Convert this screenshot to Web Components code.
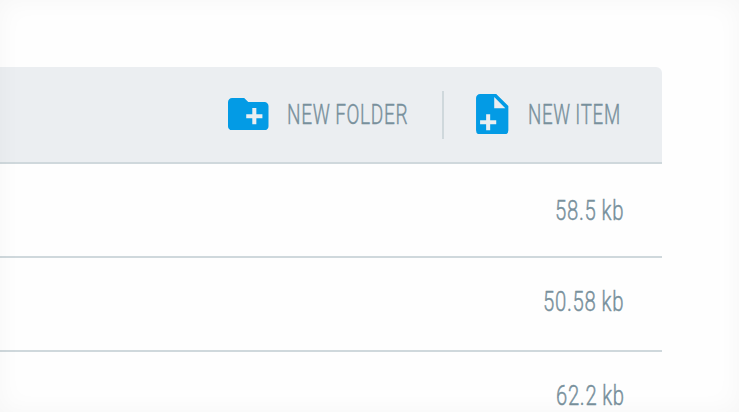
<!DOCTYPE html>
<html lang="en">
<head>
<meta charset="utf-8">
<title>Files</title>
<style>
html,body{margin:0;width:739px;height:412px;overflow:hidden;background:#fefefe}
</style>
</head>
<body>
<file-panel></file-panel>
<script>
// Text condensed to a given ink width; the host box is one cap height tall.
class CondensedText extends HTMLElement {
  connectedCallback() {
    const w = this.getAttribute('width');
    this.attachShadow({ mode: 'open' }).innerHTML = `<style>
      :host{display:block;flex:none;width:${w}px;height:20px}
      svg{display:block;overflow:visible}
      text{font:300 28px/20px Roboto,"Liberation Sans",sans-serif;letter-spacing:1px;word-spacing:-1px;fill:#78909c;stroke:#78909c;stroke-width:.45px}
    </style><svg width="${w}" height="20"><text x="-1" y="20" textLength="${+w + 2.3}" lengthAdjust="spacingAndGlyphs"></text></svg>`;
    this.shadowRoot.querySelector('text').textContent = this.textContent;
  }
}
customElements.define('condensed-text', CondensedText);

const ICONS = {
  folder: { box: '2 4 20 16', w: 40.5, h: 32.4, d: 'M20 6h-8l-2-2H4c-1.11 0-1.99.89-1.99 2L2 18c0 1.11.89 2 2 2h16c1.11 0 2-.89 2-2V8c0-1.11-.89-2-2-2zm-1 8h-3v3h-2v-3h-3v-2h3V9h2v3h3v2z' },
  file: { box: '4 2 16 20', w: 32.4, h: 40.4, d: 'M14 2H6C4.89 2 4 2.89 4 4v16a2 2 0 0 0 2 2h12a2 2 0 0 0 2-2V8l-6-6zM13 3.5 18.5 9H13V3.5zM9 12h2v3h3v2h-3v3H9v-3H6v-2h3v-3z' }
};
class ActionIcon extends HTMLElement {
  connectedCallback() {
    const i = ICONS[this.getAttribute('name')];
    this.attachShadow({ mode: 'open' }).innerHTML = `<style>
      :host{display:block;flex:none}
      svg{display:block}
    </style><svg width="${i.w}" height="${i.h}" viewBox="${i.box}"><path fill="#039be5" fill-rule="evenodd" d="${i.d}"/></svg>`;
  }
}
customElements.define('action-icon', ActionIcon);

class ToolBar extends HTMLElement {
  connectedCallback() {
    this.attachShadow({ mode: 'open' }).innerHTML = `<style>
      :host{display:flex;box-sizing:border-box;height:97.5px;width:662px;padding:0 0 0 228.2px;
        align-items:center;background:#ebeef1;border-bottom:2px solid #cfd8dc;border-top-right-radius:6px}
      .action{display:flex;align-items:center}
      .action.folder{gap:19.5px}
      .action.item{gap:20.4px}
      .rule{flex:none;width:2px;height:48px;background:#cfd8dc;margin:2px 32px 0 35.3px}
    </style>
    <div class="action folder"><action-icon name="folder"></action-icon><condensed-text width="119">NEW FOLDER</condensed-text></div>
    <div class="rule"></div>
    <div class="action item"><action-icon name="file"></action-icon><condensed-text width="90.5">NEW ITEM</condensed-text></div>`;
  }
}
customElements.define('tool-bar', ToolBar);

class FileRow extends HTMLElement {
  connectedCallback() {
    this.attachShadow({ mode: 'open' }).innerHTML = `<style>
      :host{display:flex;box-sizing:border-box;height:94px;width:662px;padding:0 39px 1px 0;
        align-items:center;justify-content:flex-end;border-bottom:2px solid #cfd8dc}
    </style><slot></slot>`;
  }
}
customElements.define('file-row', FileRow);

class FilePanel extends HTMLElement {
  connectedCallback() {
    this.attachShadow({ mode: 'open' }).innerHTML = `<style>
      :host{display:block;position:relative;box-sizing:border-box;width:739px;height:412px;padding-top:66.5px;overflow:hidden}
      .vignette{position:absolute;inset:0;box-shadow:inset 0 0 26px rgba(0,0,0,.035);pointer-events:none}
    </style>
    <tool-bar></tool-bar>
    <file-row><condensed-text width="67">58.5 kb</condensed-text></file-row>
    <file-row style="padding-bottom:6px"><condensed-text width="79">50.58 kb</condensed-text></file-row>
    <file-row style="padding-bottom:6px"><condensed-text width="66.5">62.2 kb</condensed-text></file-row>
    <div class="vignette"></div>`;
  }
}
customElements.define('file-panel', FilePanel);
</script>
</body>
</html>
